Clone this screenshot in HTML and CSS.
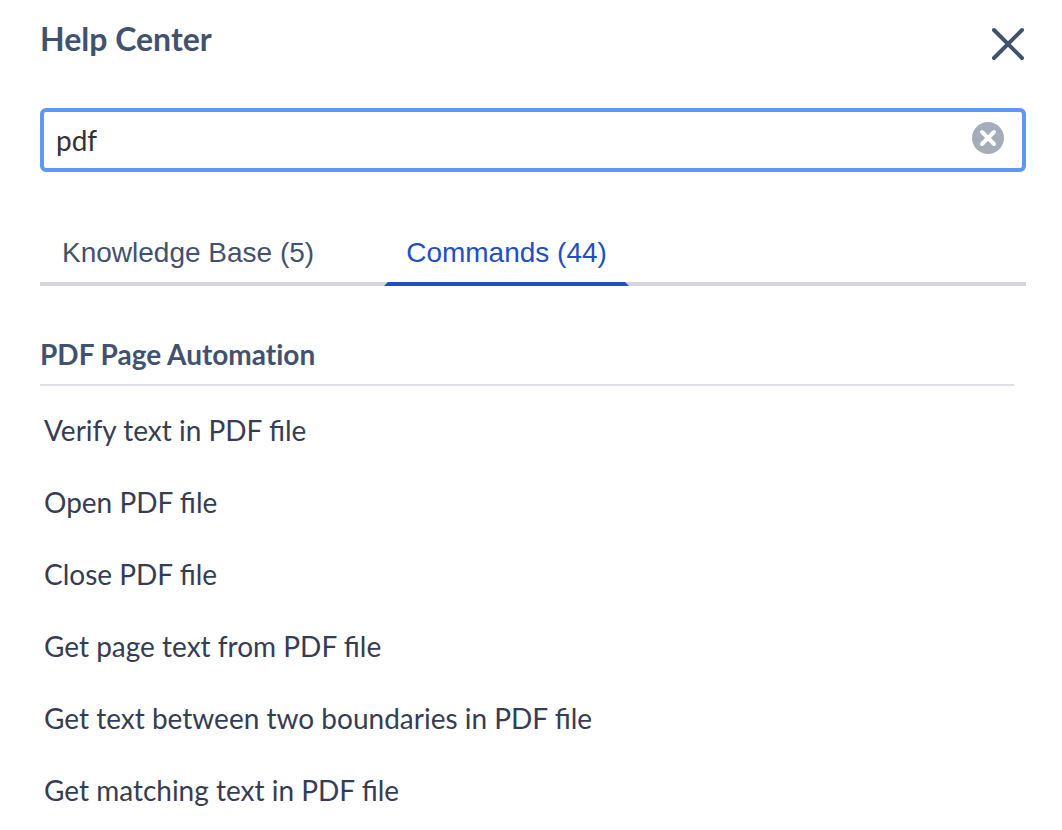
FILE: index.html
```html
<!DOCTYPE html>
<html lang="en">
<head>
    <meta charset="UTF-8">
    <meta name="viewport" content="width=device-width, initial-scale=1.0">
    <title>Help Center</title>
    <link rel="stylesheet" href="styles.css">
</head>
<body>
    <header class="header">
        <h1>Help Center</h1>
        <button class="close-btn" type="button" aria-label="Close">
            <svg width="36" height="34" viewBox="0 0 36 34">
                <path d="M4 3 L32 31 M32 3 L4 31" fill="none" stroke="#42526e" stroke-width="4" stroke-linecap="round"/>
            </svg>
        </button>
    </header>

    <div class="search">
        <input class="search-input" type="text" value="pdf" aria-label="Search help">
        <button class="clear-btn" type="button" aria-label="Clear search">
            <svg width="32" height="32" viewBox="0 0 32 32">
                <circle cx="16" cy="16" r="16" fill="#a5adba"/>
                <path d="M10 10 L22 22 M22 10 L10 22" fill="none" stroke="#fff" stroke-width="4" stroke-linecap="round"/>
            </svg>
        </button>
    </div>

    <div class="tabs" role="tablist">
        <button class="tab" type="button" role="tab" aria-selected="false">Knowledge Base (5)</button>
        <button class="tab active" type="button" role="tab" aria-selected="true">Commands (44)</button>
    </div>

    <section class="results">
        <h2>PDF Page Automation</h2>
        <ul class="commands">
            <li><a href="#">Verify text in PDF file</a></li>
            <li><a href="#">Open PDF file</a></li>
            <li><a href="#">Close PDF file</a></li>
            <li><a href="#">Get page text from PDF file</a></li>
            <li><a href="#">Get text between two boundaries in PDF file</a></li>
            <li><a href="#">Get matching text in PDF file</a></li>
        </ul>
    </section>
</body>
</html>
```
FILE: styles.css
```css
* {
    box-sizing: border-box;
}

body {
    margin: 0;
    padding: 20px 36px 0 40px;
    background-color: #fff;
    color: #344054;
    font-family: Lato, sans-serif;
    font-size: 28px;
}

button {
    padding: 0;
    border: 0;
    background: none;
    cursor: pointer;
}

svg {
    display: block;
}

/* header */
.header {
    display: flex;
    justify-content: space-between;
    align-items: flex-start;
    height: 88px;
}

h1 {
    margin: 0;
    color: #42526e;
    font-size: 32px;
    line-height: 38px;
}

.close-btn {
    margin-top: 7px;
}

/* search box */
.search {
    display: flex;
    align-items: center;
    height: 64px;
    padding: 0 18px 4px 12px;
    border: 4px solid #5f97f6;
    border-radius: 6px;
}

.search-input {
    flex: 1;
    min-width: 0;
    padding: 4px 0 0;
    border: 0;
    outline: 0;
    color: #333;
    font-family: Lato, sans-serif;
    font-size: 28px;
}

/* tabs */
.tabs {
    display: flex;
    gap: 48px;
    margin-top: 48px;
    border-bottom: 4px solid #d3d4d8;
}

/* the clear side borders bevel the ends of the underline */
.tab {
    height: 66px;
    margin-bottom: -4px;
    padding: 4px 18px 0;
    border: 4px solid transparent;
    border-top: 0;
    color: #42526e;
    font-family: "Liberation Sans", Arial, sans-serif;
    font-size: 28px;
}

.tab.active {
    border-bottom-color: #1f4fc4;
    color: #1f4fc4;
}

/* results */
.results {
    margin: 48px 12px 0 0;
}

h2 {
    margin: 0;
    padding-bottom: 10px;
    border-bottom: 2px solid #dfe0e6;
    color: #42526e;
    font-size: 28px;
    font-variant-ligatures: none;
    line-height: 40px;
}

.commands {
    margin: 8px 0 0;
    padding: 0;
    list-style: none;
}

.commands a {
    display: block;
    padding: 0 4px;
    color: #363d52;
    line-height: 72px;
    text-decoration: none;
}
```
